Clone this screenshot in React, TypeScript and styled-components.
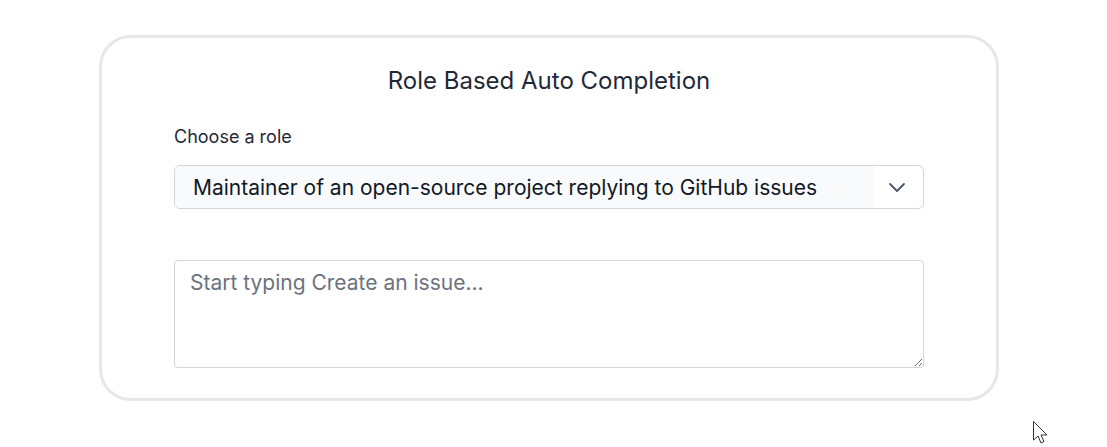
import React from "react";
import styled, { createGlobalStyle } from "styled-components";

const Global = createGlobalStyle`
  html, body { margin: 0; padding: 0; background: #ffffff; }
  body { font-family: Inter, "Noto Sans", sans-serif; color: #1f2937; }
  * { box-sizing: border-box; }
`;

const Page = styled.div`
  position: relative;
  width: 1107px;
  height: 447px;
  padding: 35px 0 0 99px;
`;

const Card = styled.div`
  width: 900px;
  height: 366px;
  border: 3px solid #e5e7eb;
  border-radius: 32px;
  padding: 28px 72px 0 72px;
  display: flex;
  flex-direction: column;
`;

const Title = styled.h1`
  margin: 0;
  text-align: center;
  font-size: 24px;
  line-height: 30px;
  font-weight: 400;
  color: #1f2937;
`;

const Label = styled.label`
  margin-top: 29px;
  font-size: 18px;
  line-height: 24px;
  font-weight: 400;
  color: #1f2937;
`;

const SelectBox = styled.div`
  margin-top: 16px;
  height: 44px;
  border: 1px solid #d1d5db;
  border-radius: 6px;
  display: flex;
  align-items: stretch;
  overflow: hidden;
  background: #ffffff;
`;

const SelectValue = styled.div`
  flex: 1;
  background: #f9fafb;
  padding: 0 18px;
  display: flex;
  align-items: center;
  font-size: 21px;
  color: #111827;
  white-space: nowrap;
`;

const Chevron = styled.div`
  width: 48px;
  padding-right: 4px;
  display: flex;
  align-items: center;
  justify-content: center;
  color: #4b5563;
`;

const TextArea = styled.textarea`
  margin-top: 51px;
  height: 108px;
  border: 1px solid #d1d5db;
  border-radius: 4px;
  padding: 8px 15px;
  font-family: Inter, "Noto Sans", sans-serif;
  font-size: 21px;
  line-height: 28px;
  color: #111827;
  resize: vertical;
  outline: none;
  &::placeholder { color: #6b7280; }
`;

const Cursor = styled.svg`
  position: absolute;
  left: 1032px;
  top: 420px;
`;

export default function App() {
  return (
    <>
      <Global />
      <Page>
        <Card>
          <Title>Role Based Auto Completion</Title>
          <Label>Choose a role</Label>
          <SelectBox>
            <SelectValue>Maintainer of an open-source project replying to GitHub issues</SelectValue>
            <Chevron>
              <svg width="18" height="18" viewBox="0 0 18 18" fill="none">
                <path d="M2 6l7 7 7-7" stroke="currentColor" strokeWidth="1.8" strokeLinecap="round" strokeLinejoin="round" />
              </svg>
            </Chevron>
          </SelectBox>
          <TextArea placeholder="Start typing Create an issue..." />
        </Card>
        <Cursor width="20" height="27" viewBox="0 0 20 27">
          <path d="M1.5 1.5 L1.5 20 L6 16 L9 23 L12 21.5 L9 15 L15 15 Z" fill="#fff" stroke="#333" strokeWidth="1" strokeLinejoin="miter" />
        </Cursor>
      </Page>
    </>
  );
}
